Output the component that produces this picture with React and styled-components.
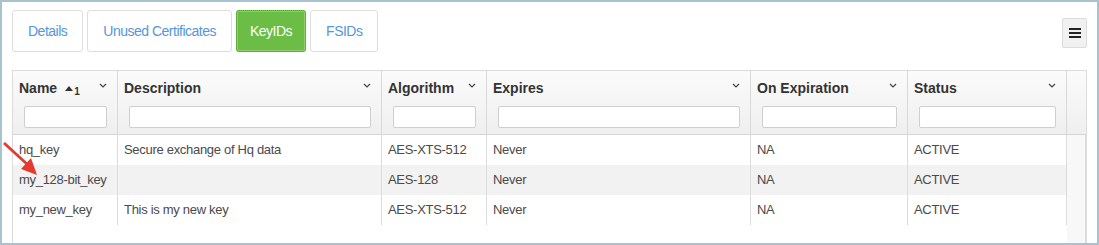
import React from 'react';
import styled, { createGlobalStyle } from 'styled-components';

const COLUMNS = [
  { key: 'name', label: 'Name', width: 105, sorted: true },
  { key: 'description', label: 'Description', width: 264 },
  { key: 'algorithm', label: 'Algorithm', width: 105 },
  { key: 'expires', label: 'Expires', width: 264 },
  { key: 'onExpiration', label: 'On Expiration', width: 157 },
  { key: 'status', label: 'Status', width: 159 },
];

const ROWS = [
  {
    name: 'hq_key',
    description: 'Secure exchange of Hq data',
    algorithm: 'AES-XTS-512',
    expires: 'Never',
    onExpiration: 'NA',
    status: 'ACTIVE',
  },
  {
    name: 'my_128-bit_key',
    description: '',
    algorithm: 'AES-128',
    expires: 'Never',
    onExpiration: 'NA',
    status: 'ACTIVE',
  },
  {
    name: 'my_new_key',
    description: 'This is my new key',
    algorithm: 'AES-XTS-512',
    expires: 'Never',
    onExpiration: 'NA',
    status: 'ACTIVE',
  },
];

const TABS = ['Details', 'Unused Certificates', 'KeyIDs', 'FSIDs'];
const ACTIVE_TAB = 'KeyIDs';

const GRID = COLUMNS.map((c) => `${c.width}px`).join(' ');

const Chevron = () => (
  <svg width="8" height="5" viewBox="0 0 8 5">
    <path d="M1 1 L4 4 L7 1" fill="none" stroke="#444" strokeWidth="1.2" />
  </svg>
);

const App = () => {
  return (
    <>
      <GlobalStyle />
      <Frame>
        <TopBar>
          <Tabs>
            {TABS.map((tab) => (
              <Tab key={tab} $active={tab === ACTIVE_TAB}>
                {tab}
              </Tab>
            ))}
          </Tabs>
          <MenuButton aria-label="menu">
            <MenuLine />
            <MenuLine />
            <MenuLine />
          </MenuButton>
        </TopBar>

        <Table>
          <Header>
            <HeaderCells>
              {COLUMNS.map((col) => (
                <HeaderCell key={col.key}>
                  <TitleRow>
                    <Title>
                      {col.label}
                      {col.sorted && (
                        <SortMark>
                          <svg width="8" height="5" viewBox="0 0 8 5">
                            <path d="M0 5 L4 0 L8 5 Z" fill="#333" />
                          </svg>
                          <sub>1</sub>
                        </SortMark>
                      )}
                    </Title>
                    <Chevron />
                  </TitleRow>
                  <Filter />
                </HeaderCell>
              ))}
            </HeaderCells>
            <ScrollHead />
          </Header>

          <Body>
            <Rows>
              {ROWS.map((row, i) => (
                <Row key={row.name} $striped={i % 2 === 1}>
                  {COLUMNS.map((col) => (
                    <Cell key={col.key}>{row[col.key]}</Cell>
                  ))}
                </Row>
              ))}
            </Rows>
            <ScrollTrack />
          </Body>
        </Table>

        <Arrow width="40" height="40" viewBox="0 0 40 40">
          <line x1="1" y1="1" x2="25" y2="23" stroke="#e53a2f" strokeWidth="2.8" />
          <path d="M34 33 L18 27 L28 16 Z" fill="#e53a2f" />
        </Arrow>
      </Frame>
    </>
  );
};

const GlobalStyle = createGlobalStyle`
  body {
    margin: 0;
    background: #fff;
    font-family: "Liberation Sans", Arial, sans-serif;
  }
`;

const Frame = styled.div`
  position: relative;
  width: 1099px;
  height: 245px;
  box-sizing: border-box;
  border: 2px solid #a8c2cf;
  padding: 8px 10px 0 10px;
  display: flex;
  flex-direction: column;
  overflow: hidden;
`;

const TopBar = styled.div`
  display: flex;
  justify-content: space-between;
  align-items: flex-start;
  height: 42px;
  margin-bottom: 18px;
`;

const Tabs = styled.div`
  display: flex;
  gap: 4px;
`;

const Tab = styled.div`
  height: 42px;
  box-sizing: border-box;
  padding: 0 ${(p) => (p.$active ? 13 : 15)}px;
  display: flex;
  align-items: center;
  font-size: 14px;
  letter-spacing: -0.5px;
  border-radius: 3px;
  border: 1px ${(p) => (p.$active ? 'dotted #5a9e34' : 'solid #dedede')};
  background: ${(p) => (p.$active ? '#6cbd45' : '#fff')};
  color: ${(p) => (p.$active ? '#fff' : '#5596dc')};
  box-shadow: ${(p) => (p.$active ? 'inset 0 0 0 1px #8fd06d' : 'none')};
`;

const MenuButton = styled.div`
  margin-top: 8px;
  width: 25px;
  height: 30px;
  box-sizing: border-box;
  border: 1px solid #dcdcdc;
  border-radius: 2px;
  background: #f1f1f1;
  display: flex;
  flex-direction: column;
  align-items: center;
  justify-content: center;
  gap: 2px;
`;

const MenuLine = styled.span`
  display: block;
  width: 12px;
  height: 2px;
  background: #222;
`;

const Table = styled.div`
  flex: 1;
  display: flex;
  flex-direction: column;
  border: 1px solid #dcdcdc;
  border-bottom: none;
  width: 1075px;
  box-sizing: border-box;
`;

const Header = styled.div`
  display: flex;
  height: 63px;
  border-bottom: 1px solid #d6d6d6;
  background: linear-gradient(#fbfbfb, #efefef);
`;

const HeaderCells = styled.div`
  display: grid;
  grid-template-columns: ${GRID};
`;

const HeaderCell = styled.div`
  border-right: 1px solid #d9d9d9;
  padding: 0 10px 0 6px;
  display: flex;
  flex-direction: column;
`;

const TitleRow = styled.div`
  display: flex;
  justify-content: space-between;
  align-items: center;
  height: 34px;
  svg {
    margin-top: -5px;
  }
`;

const Title = styled.span`
  font-size: 14px;
  font-weight: bold;
  color: #333;
  display: flex;
  align-items: center;
`;

const SortMark = styled.span`
  display: inline-flex;
  align-items: center;
  margin-left: 8px;
  svg {
    margin-top: 0;
  }
  sub {
    font-size: 10px;
    margin-left: 1px;
    margin-top: 6px;
  }
`;

const Filter = styled.input`
  margin: 1px 0 0 5px;
  width: calc(100% - 5px);
  height: 22px;
  box-sizing: border-box;
  border: 1px solid #cfcfcf;
  border-radius: 2px;
  background: #fff;
`;

const ScrollHead = styled.div`
  flex: 1;
`;

const Body = styled.div`
  flex: 1;
  display: flex;
`;

const Rows = styled.div`
  display: flex;
  flex-direction: column;
`;

const Row = styled.div`
  display: grid;
  grid-template-columns: ${GRID};
  height: 30px;
  background: ${(p) => (p.$striped ? '#f2f2f2' : '#fff')};
`;

const Cell = styled.div`
  border-right: 1px solid #dcdcdc;
  padding: 0 6px;
  display: flex;
  align-items: center;
  padding-bottom: 1px;
  font-size: 13px;
  color: #4a4a4a;
  letter-spacing: -0.3px;
  white-space: nowrap;
`;

const ScrollTrack = styled.div`
  flex: 1;
  background: #f8f8f8;
  border-right: 1px solid #dcdcdc;
`;

const Arrow = styled.svg`
  position: absolute;
  left: 1px;
  top: 140px;
`;

export default App;
